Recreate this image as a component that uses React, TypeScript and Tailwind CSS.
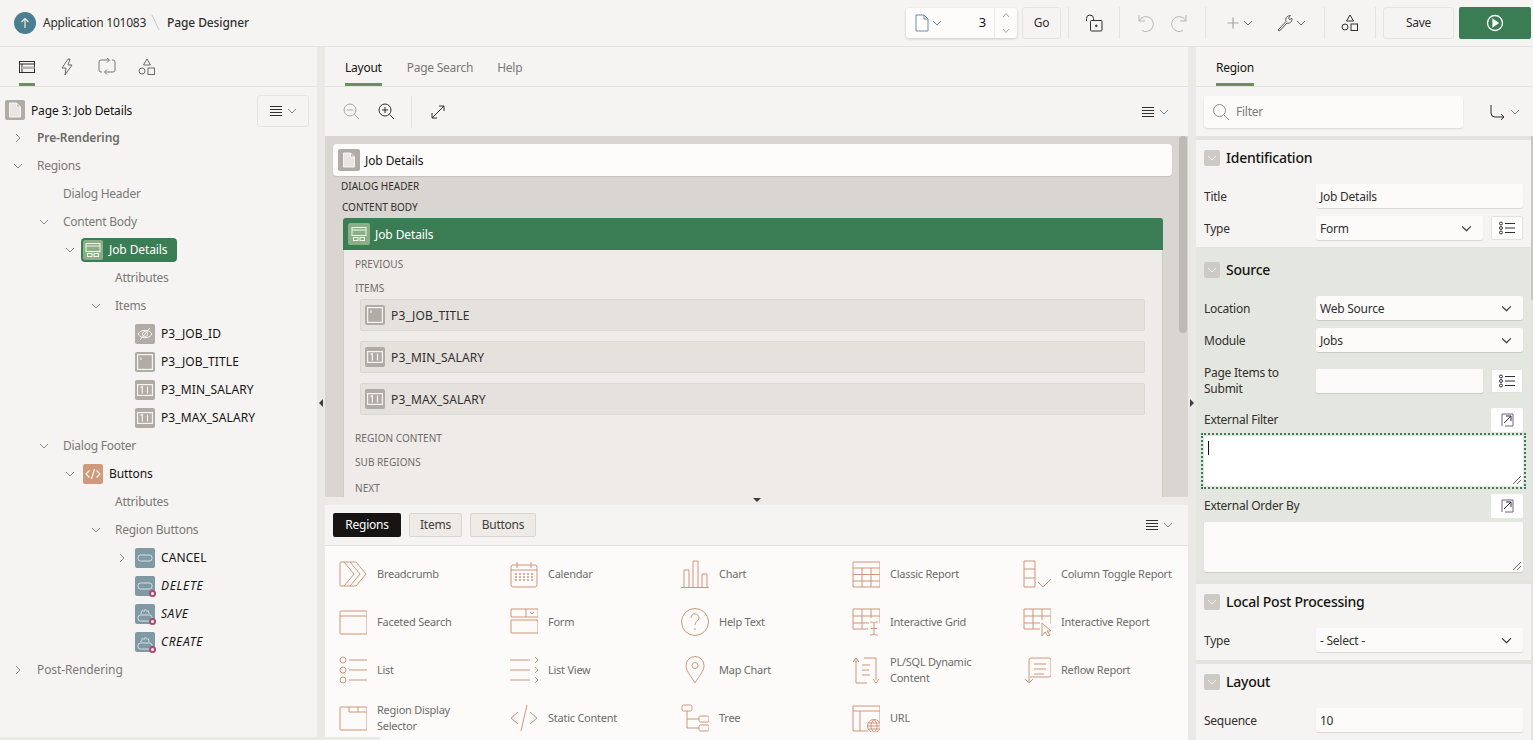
import React from "react";

const S = ({ w = 20, h = 20, vb, c = "#161513", sw = 1, children, cls = "" }: any) => (
  <svg width={w} height={h} viewBox={vb || `0 0 ${w} ${h}`} fill="none" stroke={c} strokeWidth={sw} className={"shrink-0 " + cls}>
    {children}
  </svg>
);

const Chev = ({ c = "#7a7875", dir = "down", s = 10 }: any) => (
  <S w={s} h={s} vb="0 0 10 10" c={c}>
    {dir === "down" ? <path d="M1 3l4 4 4-4" /> : <path d="M3 1l4 4-4 4" />}
  </S>
);

const Ham = () => (
  <S w={12} h={10} c="#312f2d">
    <path d="M0 0.500h12M0 3.500h12M0 6.500h12M0 9.500h12" />
  </S>
);

const MenuIc = () => (
  <div className="flex items-center gap-[5px]">
    <Ham />
    <Chev c="#6d8b9c" s={10} />
  </div>
);

const Sep = ({ cls = "" }: any) => <div className={"w-px h-8 bg-[#e6e4e1] shrink-0 " + cls} />;

const Shapes = ({ c = "#312f2d" }: any) => (
  <S w={18} h={18} c={c}>
    <path d="M9 1l3.500 6h-7z" />
    <circle cx="4" cy="13" r="3" />
    <rect x="10" y="10" width="6.500" height="6.500" />
  </S>
);

function Header() {
  return (
    <div className="h-[47px] shrink-0 flex items-center border-b border-[#e4e2df] bg-[#f5f4f2] pl-[14px] pr-[2px]">
      <div className="w-[22px] h-[22px] rounded-full bg-[#4a7f91] flex items-center justify-center">
        <S w={12} h={12} c="#f3efe3" sw={1.2}>
          <path d="M6 11V1.500M2.500 5L6 1.500 9.500 5" />
        </S>
      </div>
      <span className="ml-[7px] text-[12px] text-[#312f2d]">Application 101083</span>
      <S w={10} h={18} c="#c9c6c2" cls="ml-[5px]">
        <path d="M1 1l7 15" />
      </S>
      <span className="ml-[6px] text-[12px] font-medium tracking-[-0.1px] text-[#312f2d]">Page Designer</span>

      <div className="ml-auto flex items-center">
        <div className="w-[111px] h-[30px] bg-[#fdfcfb] rounded-[3px] shadow-[0_1px_3px_rgba(0,0,0,0.18)] flex items-center">
          <div className="flex items-center pl-[9px] gap-[3px] w-[80px]">
            <S w={14} h={18} c="#6f8ea3">
              <path d="M1 1h8l4 4v12H1zM9 1v4h4" />
            </S>
            <Chev c="#6f8ea3" />
            <span className="ml-auto text-[13px] text-[#161513]">3</span>
          </div>
          <div className="ml-[8px] h-full w-px bg-[#e8e6e3]" />
          <div className="flex flex-col flex-1 items-center gap-[10px]">
            <S w={8} h={6} c="#a9a7a4"><path d="M1 5l3-3.500L7 5" /></S>
            <S w={8} h={6} c="#a9a7a4"><path d="M1 1l3 3.500L7 1" /></S>
          </div>
        </div>
        <button className="ml-[5px] w-[39px] h-8 rounded-[3px] border border-[#e6e4e1] text-[12px] text-[#312f2d]">Go</button>
        <Sep cls="ml-[7px]" />
        <div className="w-[50px] flex justify-center">
          <S w={18} h={18} c="#312f2d">
            <rect x="5.500" y="6.500" width="11.500" height="10.500" rx="1" />
            <path d="M1.500 7V4.500a3.500 3.500 0 0 1 7 0V6.500" />
            <circle cx="11.300" cy="11.800" r="0.800" fill="#312f2d" />
          </S>
        </div>
        <Sep />
        <div className="w-[85px] flex justify-center gap-[17px]">
          <S w={18} h={18} c="#b9b7b4">
            <path d="M3 1v6h6M3 7a7.500 7.500 0 1 1 3 9.500" />
          </S>
          <S w={18} h={18} c="#b9b7b4">
            <path d="M15 1v6H9M15 7a7.500 7.500 0 1 0-3 9.500" />
          </S>
        </div>
        <Sep />
        <div className="w-[118px] flex items-center pl-[21px]">
          <S w={12} h={12} c="#a6a4a1" sw={1.2}><path d="M6 0.500v11M0.500 6h11" /></S>
          <div className="ml-[4px]"><Chev c="#6e6c69" /></div>
          <div className="ml-[23px]">
            <S w={18} h={18} c="#57534f">
              <path d="M2 16l8-8.500c-1-3 1-6 4.500-6L12.500 4l1 1.500 2.500-1c.5 3-2.500 5.500-5 4.500L3.500 17z" />
            </S>
          </div>
          <div className="ml-[2px]"><Chev c="#6e6c69" /></div>
        </div>
        <Sep />
        <div className="w-[50px] flex justify-center">
          <Shapes />
        </div>
        <Sep />
        <button className="ml-[7px] w-[71px] h-8 rounded-[3px] border border-[#e6e4e1] text-[12px] text-[#312f2d]">Save</button>
        <div className="ml-[5px] w-[72px] h-8 rounded-[2px] bg-[#3a7d55] flex items-center justify-center">
          <S w={18} h={18} c="#ffffff" sw={1.3}>
            <circle cx="9" cy="9" r="7.500" />
            <path d="M7 5.500l5 3.500-5 3.500z" fill="#ffffff" />
          </S>
        </div>
      </div>
    </div>
  );
}

const Tab = ({ label, active, cls = "" }: any) => (
  <div className={"h-full flex items-center pt-[3px] relative text-[12px] " + (active ? "text-[#161513] " : "text-[#7b7977] ") + cls}>
    {label}
    {active && <div className="absolute bottom-0 left-0 right-0 h-[3px] bg-[#6b8f5f]" />}
  </div>
);

const tileBase = "w-5 h-5 rounded-[2px] flex items-center justify-center relative shrink-0 ";
const Tile = ({ bg = "bg-[#b0aba5]", children, dot, cls = "" }: any) => (
  <div className={tileBase + bg + " " + cls}>
    {children}
    {dot && <div className="absolute -right-[1px] -bottom-[1px] w-[7px] h-[7px] rounded-full bg-[#f5f4f2] border-2 border-[#b5476a]" />}
  </div>
);

const PageGlyph = () => (
  <S w={14} h={16} c="#f7f5f3">
    <path d="M1.500 1h7l4 4v10h-11zM8.500 1v4h4" fill="#e9e5e2" />
  </S>
);
const RegionGlyph = ({ c = "#f5f4f2" }: any) => (
  <S w={16} h={16} c={c}>
    <rect x="1" y="1.500" width="14" height="8" />
    <path d="M1 4h14" />
    <rect x="2.500" y="11.500" width="4.500" height="3" />
    <rect x="9" y="11.500" width="4.500" height="3" />
  </S>
);
const EyeTile = () => (
  <Tile>
    <S w={16} h={14} c="#f5f4f2">
      <path d="M1 7c3-5 11-5 14 0-3 5-11 5-14 0z" />
      <circle cx="8" cy="7" r="2.500" />
      <path d="M3 13L13 1" />
    </S>
  </Tile>
);
const TextTile = () => (
  <Tile>
    <S w={16} h={16} c="#f5f4f2" sw={1.2}>
      <rect x="0.600" y="0.600" width="14.800" height="14.800" />
      <path d="M4 3.500v2.500" />
    </S>
  </Tile>
);
const NumTile = () => (
  <Tile>
    <S w={16} h={12} c="#f5f4f2" sw={1.2}>
      <rect x="0.600" y="0.600" width="14.800" height="10.800" />
      <path d="M3.500 3.500l1.800-1v7M10.500 2.500v7" />
    </S>
  </Tile>
);
const BtnTile = ({ dot }: any) => (
  <Tile bg="bg-[#7f9aa3]" dot={dot}>
    <S w={16} h={8} c="#d5e2e5">
      <rect x="1" y="1" width="14" height="6" rx="2.500" />
    </S>
  </Tile>
);
const HotTile = () => (
  <Tile bg="bg-[#7f9aa3]" dot>
    <S w={16} h={16} c="#d5e2e5">
      <rect x="1" y="9" width="14" height="6" rx="2.500" />
      <path d="M4 8c0-2 1-2 1.500-4 .8.800 1.200 1 1.500 1.500L8.500 3c.5 1.500 1.200 1.500 1.500 2.500l1-1c.8 1.200 1 2.200 1 3.500" />
    </S>
  </Tile>
);

const Row = ({ pl, toggle, label, gap = "ml-[11px]", cls = "text-[#7b7977]" }: any) => (
  <div className={"h-7 flex items-center text-[12px] " + pl}>
    <div className="w-4 flex justify-center">{toggle && <Chev dir={toggle} c="#8d8b88" />}</div>
    <span className={gap + " " + cls}>{label}</span>
  </div>
);
const ItemRow = ({ pl, toggle, tile, label, italic, tr = "tracking-[0.1px]" }: any) => (
  <div className={"h-7 flex items-center text-[12px] " + pl}>
    <div className="w-4 flex justify-center">{toggle && <Chev dir={toggle} c="#8d8b88" />}</div>
    <div className="ml-[5px]">{tile}</div>
    <span className={"ml-[6px] text-[#161513] " + tr + " " + (italic ? "italic" : "")}>{label}</span>
  </div>
);

function LeftPanel() {
  return (
    <div className="w-[317px] shrink-0 flex flex-col bg-[#f5f4f2] overflow-hidden">
      <div className="h-10 shrink-0 border-b border-[#e4e2df] flex pl-[19px] gap-[24px]">
        <div className="relative w-4 flex items-center justify-center h-full">
          <S w={16} h={14} c="#312f2d">
            <rect x="0.500" y="1.500" width="15" height="11" />
            <path d="M0.500 4h15M3 4v8.500" />
            <rect x="3" y="6.500" width="12.500" height="2.500" fill="#b8b5b1" stroke="none" />
          </S>
          <div className="absolute bottom-0 left-0 right-0 h-[3px] bg-[#6b8f5f]" />
        </div>
        <div className="w-4 flex items-center justify-center">
          <S w={14} h={18} c="#6d6b68">
            <path d="M8 1L2 10h4l-1 7 7-10H8l2-6z" />
          </S>
        </div>
        <div className="w-4 flex items-center justify-center">
          <S w={18} h={17} c="#7b7977">
            <path d="M4 14H3a2 2 0 0 1-2-2V4a2 2 0 0 1 2-2h8M9 0l2.500 2L9 4.500M14 2h1a2 2 0 0 1 2 2v8a2 2 0 0 1-2 2H7M9 11.500L6.500 14 9 16.500" />
          </S>
        </div>
        <div className="w-4 flex items-center justify-center">
          <Shapes c="#6d6b68" />
        </div>
      </div>
      <div className="h-[47px] shrink-0 flex items-center pl-[5px] pr-2">
        <Tile cls="mb-[2px]"><PageGlyph /></Tile>
        <span className="ml-[6px] text-[12px] tracking-[-0.15px] text-[#161513]">Page 3: Job Details</span>
        <div className="ml-auto w-[52px] h-8 rounded-[3px] border border-[#e6e4e1] flex items-center justify-center">
          <MenuIc />
        </div>
      </div>
      <div className="-mt-[10px]">
        <Row pl="pl-[10px]" toggle="right" label="Pre-Rendering" cls="text-[#6e6c69] font-semibold tracking-[-0.1px]" />
        <Row pl="pl-[10px]" toggle="down" label="Regions" />
        <Row pl="pl-[36px]" label="Dialog Header" />
        <Row pl="pl-[36px]" toggle="down" label="Content Body" />
        <div className="h-7 flex items-center pl-[62px]">
          <div className="w-4 flex justify-center"><Chev c="#8d8b88" /></div>
          <div className="ml-[3px] h-6 w-[96px] rounded-[4px] bg-[#3a7d55] flex items-center pl-[2px]">
            <Tile bg="bg-[#8bae86]"><RegionGlyph /></Tile>
            <span className="ml-[6px] text-[12px] tracking-[-0.1px] text-white">Job Details</span>
          </div>
        </div>
        <Row pl="pl-[88px]" label="Attributes" />
        <Row pl="pl-[88px]" toggle="down" label="Items" />
        <ItemRow pl="pl-[114px]" tile={<EyeTile />} label="P3_JOB_ID" />
        <ItemRow pl="pl-[114px]" tile={<TextTile />} label="P3_JOB_TITLE" />
        <ItemRow pl="pl-[114px]" tile={<NumTile />} label="P3_MIN_SALARY" />
        <ItemRow pl="pl-[114px]" tile={<NumTile />} label="P3_MAX_SALARY" />
        <Row pl="pl-[36px]" toggle="down" label="Dialog Footer" />
        <ItemRow
          pl="pl-[62px]"
          toggle="down"
          label="Buttons"
          tr="tracking-[-0.1px]"
          tile={
            <Tile bg="bg-[#cf9a7c]">
              <S w={16} h={12} c="#fbf4ee" sw={1.2}>
                <path d="M4.500 2.500L1 6l3.500 3.500M11.500 2.500L15 6l-3.500 3.500M9.500 1l-3 10" />
              </S>
            </Tile>
          }
        />
        <Row pl="pl-[88px]" label="Attributes" />
        <Row pl="pl-[88px]" toggle="down" label="Region Buttons" />
        <ItemRow pl="pl-[114px]" toggle="right" tile={<BtnTile />} label="CANCEL" />
        <ItemRow pl="pl-[114px]" tile={<BtnTile dot />} label="DELETE" italic tr="tracking-[0.7px]" />
        <ItemRow pl="pl-[114px]" tile={<HotTile />} label="SAVE" italic tr="tracking-[0.5px]" />
        <ItemRow pl="pl-[114px]" tile={<HotTile />} label="CREATE" italic tr="tracking-[0.6px]" />
        <Row pl="pl-[10px]" toggle="right" label="Post-Rendering" cls="text-[#7b7977] tracking-[-0.1px]" />
      </div>
    </div>
  );
}

const CanvasItem = ({ label, tile }: any) => (
  <div className="h-8 mb-[10px] ml-[16px] mr-[17px] rounded-[2px] bg-[#e5e1dd] border border-[#dbd7d3] flex items-center pl-1">
    {tile}
    <span className="ml-[6px] pt-[1px] text-[12px] tracking-[0.15px] text-[#312f2d]">{label}</span>
  </div>
);

const Cap = ({ t, cls = "" }: any) => (
  <div className={"text-[10px] leading-[14px] tracking-[0.05px] text-[#6e6c69] uppercase pl-[11px] " + cls}>{t}</div>
);

const G = "#d0957d";
const icons: Record<string, React.ReactNode> = {
  Breadcrumb: <path d="M17 2H2a1 1 0 0 0-1 1v22a1 1 0 0 0 1 1h15M5 2l10 12L5 26M11 2l10 12-10 12M17 2l10 12-10 12" />,
  Calendar: (
    <>
      <rect x="1" y="5" width="26" height="22" rx="2" />
      <path d="M1 10h26M7 2v6M21 2v6" />
      <path d="M5 14h18M5 17h18M5 20h18" strokeDasharray="2 2" strokeWidth="1.500" />
    </>
  ),
  Chart: <path d="M0 27.500h28M3 27V10h5v17M12 27V1h5v26M21 27V14h5v13" />,
  "Classic Report": <path d="M1 2h27v25H1zM1 8h27M1 14.500h27M1 21h27M10 8v19M19 8v19" />,
  "Column Toggle Report": <path d="M1 1h11v26H1zM1 9h11M1 18h11M15 22l5 5 8-8" />,
  "Faceted Search": (
    <>
      <rect x="1" y="3" width="27" height="23" rx="1" />
      <path d="M1 8h27" />
    </>
  ),
  Form: <path d="M1 1h27v8H1zM16 1v8M20 4l2 2 2-2M1 12h27v13H1z" />,
  "Help Text": (
    <>
      <circle cx="14" cy="14" r="13.500" />
      <path d="M10 10c0-6 8-5 8 0 0 3-4 3-4 7M14 20v2" />
    </>
  ),
  "Interactive Grid": <path d="M16 21H1V1h27v14M1 8h27M1 15h16M10 1v20M19 1v9M18 14c2 0 3 0 4 1 1-1 2-1 4-1M22 15v11M18 27c2 0 3 0 4-1 1 1 2 1 4 1M19 20.500h6" />,
  "Interactive Report": <path d="M17 21H1V1h27v15M1 8h27M1 15h16M10 1v20M19 1v11M19 15v13l3-4 3 4 2-1-3-4h4z" />,
  List: (
    <>
      <circle cx="4" cy="4" r="3" />
      <circle cx="4" cy="14" r="3" />
      <circle cx="4" cy="24" r="3" />
      <path d="M10 4h18M10 14h18M10 24h18" />
    </>
  ),
  "List View": <path d="M0 4h20M0 14h20M0 24h20M25 1l3 3-3 3M25 11l3 3-3 3M25 21l3 3-3 3" />,
  "Map Chart": (
    <>
      <path d="M14 27C10 20 5 15 5 9.500a9 9 0 0 1 18 0C23 15 18 20 14 27z" />
      <circle cx="14" cy="9.500" r="3" />
    </>
  ),
  "PL/SQL Dynamic Content": <path d="M1 6l3-4 3 4M4 2v25h11M12 2h12v22M24 27l-3-4M24 27l3-4M10 9h8M10 14h7M10 19h8" />,
  "Reflow Report": <path d="M6 26V4a2 2 0 0 1 2-2h18a2 2 0 0 1 2 2v15a2 2 0 0 1-2 2H7M2 23l4 4 4-4M11 8h12M11 13h12M11 18h10" />,
  "Region Display Selector": (
    <>
      <rect x="1" y="3" width="27" height="23" rx="1" />
      <path d="M10 3v5h18M19 3v5" />
    </>
  ),
  "Static Content": <path d="M8 8l-7 6 7 6M20 8l7 6-7 6M17 1l-6 26" />,
  Tree: (
    <>
      <rect x="1" y="1" width="10" height="6" rx="1.500" />
      <rect x="18" y="12" width="10" height="6" rx="1.500" />
      <rect x="18" y="21" width="10" height="6" rx="1.500" />
      <path d="M6 7v17h12M6 15h12" />
    </>
  ),
  URL: (
    <>
      <path d="M28 19V2H1v25h15M1 7h27M8 7v20" />
      <circle cx="22" cy="22" r="6.500" />
      <path d="M15.500 22h13M22 15.500c-4 4-4 9 0 13M22 15.500c4 4 4 9 0 13M16.500 19h11M16.500 25h11" />
    </>
  ),
};

const gallery = [
  "Breadcrumb",
  "Calendar",
  "Chart",
  "Classic Report",
  "Column Toggle Report",
  "Faceted Search",
  "Form",
  "Help Text",
  "Interactive Grid",
  "Interactive Report",
  "List",
  "List View",
  "Map Chart",
  "PL/SQL Dynamic Content",
  "Reflow Report",
  "Region Display Selector",
  "Static Content",
  "Tree",
  "URL",
];

function MiddlePanel() {
  return (
    <div className="flex-1 min-w-0 flex flex-col bg-[#f5f4f2] overflow-hidden">
      <div className="h-10 shrink-0 border-b border-[#e4e2df] flex pl-5">
        <Tab label="Layout" active />
        <Tab label="Page Search" cls="ml-[25px]" />
        <Tab label="Help" cls="ml-[24px]" />
      </div>
      <div className="h-[49px] shrink-0 flex items-center pl-[18px] pr-[19px]">
        <S w={17} h={17} c="#a9a7a4">
          <circle cx="7" cy="7" r="6" />
          <path d="M4 7h6M11.500 11.500L16 16" />
        </S>
        <S w={17} h={17} c="#312f2d" cls="ml-[18px]">
          <circle cx="7" cy="7" r="6" />
          <path d="M4 7h6M7 4v6M11.500 11.500L16 16" />
        </S>
        <div className="ml-4 w-px h-8 bg-[#e4e2df]" />
        <S w={14} h={14} c="#312f2d" cls="ml-[19px]">
          <path d="M1 13L13 1M8 1h5v5M1 8v5h5" />
        </S>
        <div className="ml-auto">
          <MenuIc />
        </div>
      </div>

      <div className="h-[361px] shrink-0 bg-[#d9d5d1] relative overflow-hidden pt-2 pl-2 pr-[16px]">
        <div className="absolute right-[1px] top-0 w-2 h-[197px] rounded bg-[#bdb9b5]" />
        <div className="h-8 rounded-[4px] bg-[#fdfcfb] flex items-center pl-[5px] shadow-[0_1px_1px_rgba(0,0,0,0.1)]">
          <Tile cls="w-[22px] h-[22px]"><PageGlyph /></Tile>
          <span className="ml-[5px] pt-[1px] text-[12px] tracking-[-0.1px] text-[#161513]">Job Details</span>
        </div>
        <div className="text-[10px] leading-[14px] tracking-normal text-[#312f2d] mt-[3px] pl-2 uppercase">Dialog Header</div>
        <div className="text-[10px] leading-[14px] tracking-normal text-[#312f2d] mt-[7px] pl-[9px] uppercase">Content Body</div>
        <div className="ml-[10px] mr-[9px] mt-[4px] rounded-t-[3px] bg-[#efebe8] border-x border-[#cfcbc7] h-[300px]">
          <div className="h-8 -mx-px bg-[#3a7d55] rounded-t-[3px] flex items-center pl-[5px]">
            <Tile bg="bg-[#8bae86]" cls="w-[22px] h-[22px]"><RegionGlyph /></Tile>
            <span className="ml-[5px] pt-[1px] text-[12px] tracking-[-0.1px] text-white">Job Details</span>
          </div>
          <Cap t="Previous" cls="mt-[7px]" />
          <Cap t="Items" cls="mt-[10px]" />
          <div className="mt-1">
            <CanvasItem label="P3_JOB_TITLE" tile={<TextTile />} />
            <CanvasItem label="P3_MIN_SALARY" tile={<NumTile />} />
            <CanvasItem label="P3_MAX_SALARY" tile={<NumTile />} />
          </div>
          <Cap t="Region Content" cls="mt-[16px]" />
          <Cap t="Sub Regions" cls="mt-[10px]" />
          <Cap t="Next" cls="mt-[12px]" />
        </div>
      </div>

      <div className="h-2 shrink-0 bg-[#eeeae6] flex justify-center pt-[1px] pl-[1px]">
        <div className="w-0 h-0 border-x-[4px] border-x-transparent border-t-[4px] border-t-[#403e3c]" />
      </div>

      <div className="h-[41px] shrink-0 border-b border-[#e4e2df] flex items-center pl-2 pr-[15px] gap-2 text-[12px]">
        <div className="w-[68px] h-6 rounded-[2px] bg-[#161513] text-white flex items-center justify-center">Regions</div>
        <div className="w-[53px] h-6 rounded-[2px] bg-[#eeeae6] border border-[#d9d5d1] text-[#403e3c] flex items-center justify-center">Items</div>
        <div className="w-[66px] h-6 rounded-[2px] bg-[#eeeae6] border border-[#d9d5d1] text-[#403e3c] flex items-center justify-center">Buttons</div>
        <div className="ml-auto"><MenuIc /></div>
      </div>

      <div className="flex-1 bg-[#fcfbfa] grid grid-cols-[171px_171px_171px_171px_171px] auto-rows-[48px] pl-[14px] pt-[4px]">
        {gallery.map((k) => (
          <div key={k} className="flex items-center gap-[10px]">
            <S w={28} h={28} c={G}>
              {icons[k]}
            </S>
            <span className={"text-[11px] leading-4 text-[#6e6c69] " + (k === "Region Display Selector" ? "w-[90px]" : "w-[116px]")}>{k}</span>
          </div>
        ))}
      </div>
    </div>
  );
}

const Input = ({ v, cls = "flex-1" }: any) => (
  <div className={"h-6 rounded-[2px] bg-[#fcfbfa] shadow-[0_1px_1px_rgba(0,0,0,0.12)] flex items-center pl-1 pt-[1px] text-[12px] text-[#312f2d] " + cls}>{v}</div>
);
const Sel = ({ v, cls = "flex-1" }: any) => (
  <div className={"h-6 rounded-[2px] bg-[#fcfbfa] shadow-[0_1px_1px_rgba(0,0,0,0.12)] flex items-center pl-1 pr-[11px] justify-between text-[12px] text-[#312f2d] " + cls}>
    <span className="pt-[1px]">{v}</span>
    <Chev c="#312f2d" s={11} />
  </div>
);
const ListBtn = () => (
  <div className="w-8 h-6 ml-2 bg-white rounded-[2px] border border-[#e4e2df] flex items-center justify-center">
    <S w={16} h={14} c="#312f2d">
      <circle cx="2" cy="2.500" r="1.500" />
      <circle cx="2" cy="7" r="1.500" />
      <circle cx="2" cy="11.500" r="1.500" />
      <path d="M6 2.500h10M6 7h10M6 11.500h10" />
    </S>
  </div>
);
const ExpBtn = () => (
  <div className="w-8 h-6 ml-auto bg-white rounded-[2px] flex items-center justify-center">
    <S w={14} h={14} c="#312f2d">
      <path d="M2 13V1h11v12H5" stroke="#6f5f8f" />
      <path d="M4 10l7-7M6 3h5v5" />
    </S>
  </div>
);
const SecHead = ({ t, cls = "" }: any) => (
  <div className={"flex items-center h-4 " + cls}>
    <div className="w-4 h-4 rounded-[2px] bg-[#cdcac6] flex items-center justify-center">
      <Chev c="#f5f4f2" s={10} />
    </div>
    <span className="ml-[6px] -mt-[1px] text-[14px] font-medium text-[#161513]">{t}</span>
  </div>
);
const Field = ({ label, children, cls = "" }: any) => (
  <div className={"flex items-center " + cls}>
    <label className="w-[112px] shrink-0 pt-[1px] text-[12px] leading-4 text-[#312f2d]">{label}</label>
    {children}
  </div>
);
const Resize = () => (
  <S w={10} h={10} c="#6e6c69" cls="absolute right-[1px] bottom-[1px]">
    <path d="M1 9l8-8M5 9l4-4" />
  </S>
);

function RightPanel() {
  return (
    <div className="w-[337px] shrink-0 flex flex-col bg-[#f5f4f2] overflow-hidden relative">
      <div className="absolute right-0 top-[89px] w-[2px] h-[164px] bg-[#c9c6c2] rounded-sm" />
      <div className="h-10 shrink-0 border-b border-[#e4e2df] flex pl-5">
        <Tab label="Region" active />
      </div>
      <div className="h-[49px] shrink-0 flex items-center pl-2">
        <div className="w-[259px] h-8 rounded-[3px] bg-[#fcfbfa] shadow-[0_1px_2px_rgba(0,0,0,0.12)] flex items-center pl-[8px]">
          <S w={18} h={18} c="#8d8b88">
            <circle cx="7.500" cy="7.500" r="6" />
            <path d="M12 12l5 5" />
          </S>
          <span className="ml-[6px] text-[12px] text-[#7b7977]">Filter</span>
        </div>
        <div className="ml-[27px] flex items-center gap-1">
          <S w={16} h={16} c="#312f2d">
            <path d="M1 1v8a4 4 0 0 0 4 4h9M11 10l3 3-3 3" />
          </S>
          <Chev c="#6d8b9c" />
        </div>
      </div>

      <div className="flex-1 bg-[#e4e2df] pt-1 pr-[2px] overflow-hidden flex flex-col">
        <section className="h-[107px] shrink-0 bg-[#f5f4f2] px-2 pt-[10px]">
          <SecHead t="Identification" />
          <Field cls="mt-[18px]" label="Title"><Input v="Job Details" /></Field>
          <Field cls="mt-2" label="Type"><Sel v="Form" /><ListBtn /></Field>
        </section>
        <section className="h-[332px] shrink-0 bg-[#e4e7df] px-2 pt-[14px] mt-px">
          <SecHead t="Source" />
          <Field cls="mt-[18px]" label="Location"><Sel v="Web Source" /></Field>
          <Field cls="mt-2" label="Module"><Sel v="Jobs" /></Field>
          <Field cls="mt-[12px]" label={<span className="block w-[90px]">Page Items to Submit</span>}>
            <Input v="" /><ListBtn />
          </Field>
          <div className="flex items-center mt-[11px] text-[12px] text-[#312f2d]">External Filter<ExpBtn /></div>
          <div className="relative mt-1 h-[50px] bg-white outline-2 outline-dotted outline-offset-1 outline-[#3a7d55]">
            <div className="absolute left-1 top-[5px] w-px h-[14px] bg-[#161513]" />
            <Resize />
          </div>
          <div className="flex items-center mt-2 text-[12px] text-[#312f2d]">External Order By<ExpBtn /></div>
          <div className="relative mt-1 h-[50px] bg-[#fcfbfa] rounded-[2px] shadow-[0_1px_1px_rgba(0,0,0,0.12)]">
            <Resize />
          </div>
        </section>
        <section className="h-[76px] shrink-0 bg-[#f5f4f2] px-2 pt-[10px] mt-[4px]">
          <SecHead t="Local Post Processing" />
          <Field cls="mt-[18px]" label="Type"><Sel v="- Select -" /></Field>
        </section>
        <section className="flex-1 bg-[#f5f4f2] px-2 pt-[10px] mt-[4px]">
          <SecHead t="Layout" />
          <Field cls="mt-[18px]" label="Sequence"><Input v="10" /></Field>
        </section>
      </div>
    </div>
  );
}

const Split = ({ dir }: any) => (
  <div className="w-2 shrink-0 bg-[#ebe9e6] flex items-center justify-center">
    {dir === "left" ? (
      <div className="w-0 h-0 border-y-[4px] border-y-transparent border-r-[4px] border-r-[#403e3c] mt-[18px]" />
    ) : (
      <div className="w-0 h-0 border-y-[4px] border-y-transparent border-l-[4px] border-l-[#403e3c] mt-[18px]" />
    )}
  </div>
);

export default function App() {
  return (
    <div className="relative h-[740px] w-[1533px] overflow-hidden flex flex-col bg-[#f5f4f2] tracking-[-0.25px] font-['Noto_Sans','Liberation_Sans',sans-serif]">
      <Header />
      <div className="flex flex-1 min-h-0">
        <LeftPanel />
        <Split dir="left" />
        <MiddlePanel />
        <Split dir="right" />
        <RightPanel />
      </div>
      <div className="absolute left-0 bottom-0 w-[380px] h-[3px] bg-[#ebe9e6] rounded-r" />
    </div>
  );
}
